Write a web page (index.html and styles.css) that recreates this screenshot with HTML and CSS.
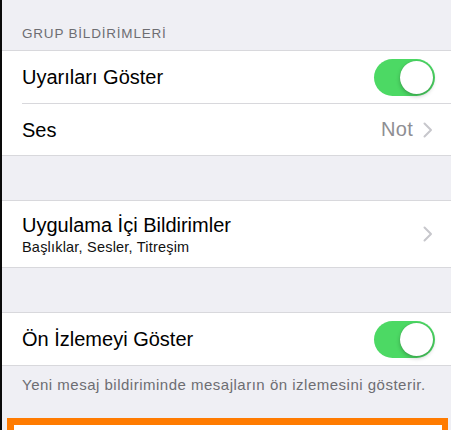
FILE: index.html
```html
<!DOCTYPE html>
<html lang="tr">
<head>
<meta charset="utf-8">
<link rel="stylesheet" href="styles.css">
</head>
<body>
<div class="screen">
  <div class="section-header">GRUP BİLDİRİMLERİ</div>
  <div class="group">
    <div class="cell">
      <span class="label">Uyarıları Göster</span>
      <span class="switch"><span class="knob"></span></span>
    </div>
    <div class="cell">
      <span class="label">Ses</span>
      <span class="accessory">
        <span class="value">Not</span>
        <svg class="chevron" width="10" height="16" viewBox="0 0 10 16"><polyline points="1.5,1.5 8,8 1.5,14.5" fill="none" stroke="#c7c7cc" stroke-width="2" stroke-linecap="round" stroke-linejoin="round"/></svg>
      </span>
    </div>
  </div>
  <div class="spacer"></div>
  <div class="group">
    <div class="cell cell-tall">
      <span class="stack">
        <span class="label">Uygulama İçi Bildirimler</span>
        <span class="sublabel">Başlıklar, Sesler, Titreşim</span>
      </span>
      <span class="accessory">
        <svg class="chevron" width="10" height="16" viewBox="0 0 10 16"><polyline points="1.5,1.5 8,8 1.5,14.5" fill="none" stroke="#c7c7cc" stroke-width="2" stroke-linecap="round" stroke-linejoin="round"/></svg>
      </span>
    </div>
  </div>
  <div class="spacer"></div>
  <div class="group">
    <div class="cell">
      <span class="label">Ön İzlemeyi Göster</span>
      <span class="switch"><span class="knob"></span></span>
    </div>
  </div>
  <div class="footer">Yeni mesaj bildiriminde mesajların ön izlemesini gösterir.</div>
  <div class="highlight"></div>
</div>
</body>
</html>
```

FILE: styles.css
```css
html, body {
  margin: 0;
  padding: 0;
  background: #0a0a0a;
  height: 100%;
  overflow: hidden;
}
.screen {
  margin-left: 2px;
  background: #efeff4;
  height: 430px;
  overflow: hidden;
  font-family: "Liberation Sans", Arial, sans-serif;
  color: #000;
}
.section-header {
  height: 50px;
  box-sizing: border-box;
  padding: 26px 0 0 20px;
  font-size: 13.5px;
  line-height: 16px;
  color: #6d6d72;
  letter-spacing: 0.8px;
}
.group {
  background: #fff;
  border-top: 1px solid #d8d8dc;
  border-bottom: 1px solid #d8d8dc;
}
.cell {
  height: 52px;
  display: flex;
  align-items: center;
  justify-content: space-between;
  margin-left: 20px;
  padding-right: 18px;
  box-sizing: border-box;
}
.cell + .cell {
  border-top: 1px solid #d8d8dc;
}
.cell-tall {
  height: 66px;
}
.label {
  font-size: 20px;
  line-height: 24px;
}
.stack {
  display: flex;
  flex-direction: column;
  padding-top: 2px;
}
.sublabel {
  font-size: 14.5px;
  line-height: 20px;
  letter-spacing: 0.2px;
  color: #111;
}
.accessory {
  display: flex;
  align-items: center;
  gap: 10px;
}
.value {
  font-size: 20px;
  letter-spacing: 0.3px;
  color: #8e8e93;
}
.chevron {
  display: block;
}
.switch {
  width: 61px;
  height: 37px;
  border-radius: 19px;
  background: #4cd964;
  display: flex;
  align-items: center;
  justify-content: flex-end;
  padding: 2px;
  box-sizing: border-box;
  margin-right: -2px;
}
.knob {
  width: 33px;
  height: 33px;
  border-radius: 50%;
  background: #fff;
  box-shadow: 0 2px 4px rgba(0,0,0,0.25), 0 0 1px rgba(0,0,0,0.2);
}
.spacer {
  height: 44px;
}
.footer {
  height: 52px;
  box-sizing: border-box;
  padding: 10px 0 0 20px;
  font-size: 15px;
  line-height: 18px;
  letter-spacing: 0.5px;
  white-space: nowrap;
  color: #6d6d72;
}
.highlight {
  margin-left: 5px;
  margin-right: 3px;
  height: 6px;
  border: 7px solid #ff7b00;
  border-right-width: 6px;
  border-bottom: none;
  background: #fff;
}
```
